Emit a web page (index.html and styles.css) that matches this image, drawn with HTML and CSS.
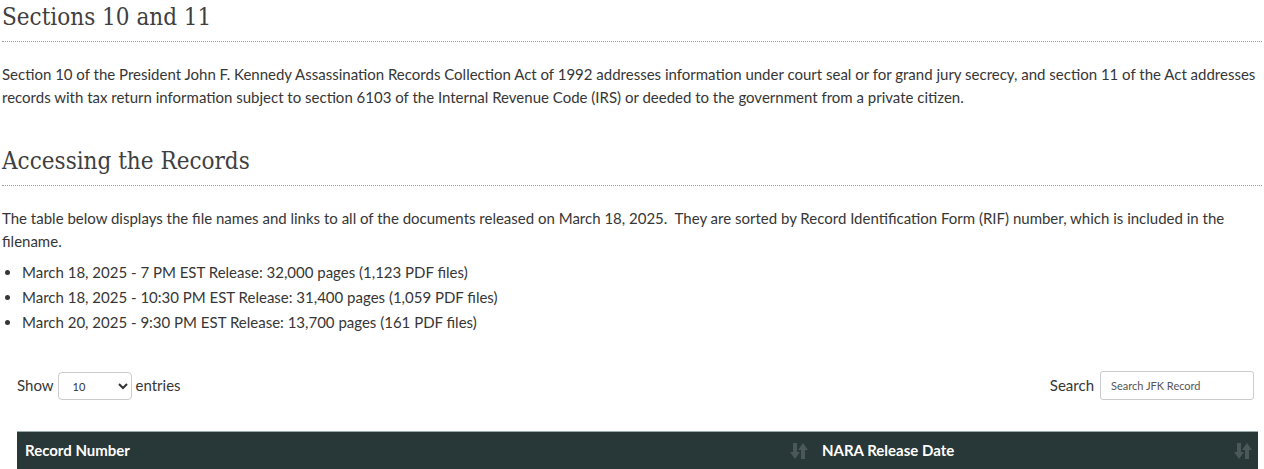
FILE: index.html
```html
<!DOCTYPE html>
<html lang="en">
<head>
    <meta charset="UTF-8">
    <meta name="viewport" content="width=device-width, initial-scale=1.0">
    <title>JFK Assassination Records - 2025 Documents Release</title>
    <link rel="stylesheet" href="styles.css">
</head>
<body>
    <div class="content">
        <h2 class="section-title">Sections 10 and 11</h2>
        <p>Section 10 of the President John F. Kennedy Assassination Records Collection Act of 1992 addresses information under court seal or for grand jury secrecy, and section 11 of the Act addresses records with tax return information subject to section 6103 of the Internal Revenue Code (IRS) or deeded to the government from a private citizen.</p>

        <h2 class="section-title">Accessing the Records</h2>
        <p class="intro">The table below displays the file names and links to all of the documents released on March 18, 2025.&nbsp; They are sorted by Record Identification Form (RIF) number, which is included in the filename.</p>
        <ul class="releases">
            <li>March 18, 2025 - 7 PM EST Release: 32,000 pages (1,123 PDF files)</li>
            <li>March 18, 2025 - 10:30 PM EST Release: 31,400 pages (1,059 PDF files)</li>
            <li>March 20, 2025 - 9:30 PM EST Release: 13,700 pages (161 PDF files)</li>
        </ul>

        <div class="records-table">
            <div class="table-controls">
                <label class="length">Show
                    <select>
                        <option>10</option>
                        <option>25</option>
                        <option>50</option>
                        <option>100</option>
                    </select>
                    entries</label>
                <label class="filter">Search
                    <input type="search" placeholder="Search JFK Record">
                </label>
            </div>

            <table>
                <thead>
                    <tr>
                        <th class="col-record">Record Number <span class="sort-icon">
                            <svg width="18" height="18" viewBox="0 0 18 18"><path d="M3 1h4v9h3l-5 7-5-7h3z"/><path d="M11 17h4V8h3l-5-7-5 7h3z"/></svg>
                        </span></th>
                        <th class="col-date">NARA Release Date <span class="sort-icon">
                            <svg width="18" height="18" viewBox="0 0 18 18"><path d="M3 1h4v9h3l-5 7-5-7h3z"/><path d="M11 17h4V8h3l-5-7-5 7h3z"/></svg>
                        </span></th>
                    </tr>
                </thead>
            </table>
        </div>
    </div>
</body>
</html>
```

FILE: styles.css
```css
* {
    margin: 0;
    padding: 0;
    box-sizing: border-box;
}

body {
    font-family: Lato, 'Liberation Sans', sans-serif;
    font-size: 15px;
    line-height: 23px;
    color: #363636;
    background: white;
}

.content {
    padding: 0 2px;
}

.section-title {
    font-family: 'DejaVu Serif Condensed', 'DejaVu Serif', serif;
    font-stretch: condensed;
    font-weight: normal;
    font-size: 24px;
    line-height: 34px;
    color: #3f3f3f;
    padding-bottom: 7px;
    border-bottom: 1px dotted #999;
    margin-bottom: 21px;
}

p {
    margin-bottom: 35px;
}

p.intro {
    margin-bottom: 7px;
}

.releases {
    padding-left: 20px;
    margin-bottom: 35px;
}

.releases li {
    line-height: 25px;
}

.records-table {
    padding: 0 4px 0 15px;
}

.table-controls {
    display: flex;
    justify-content: space-between;
    align-items: center;
    height: 30px;
    margin-bottom: 31px;
}

.table-controls label {
    display: flex;
    align-items: center;
    gap: 4px;
}

.length select {
    width: 74px;
    height: 28px;
    margin-top: 2px;
    border: 1px solid #ccc;
    border-radius: 4px;
    background: white;
    font-family: Lato, sans-serif;
    font-size: 11px;
    color: #333;
    padding-left: 10px;
}

.filter {
    padding-right: 4px;
}

.filter input {
    width: 154px;
    height: 29px;
    margin-left: 2px;
    border: 1px solid #ccc;
    border-radius: 3px;
    font-family: Lato, sans-serif;
    font-size: 11px;
    padding: 0 10px;
}

.filter input::placeholder {
    color: #555;
}

table {
    width: 100%;
    border-collapse: collapse;
}

th {
    background: #283737;
    color: white;
    text-align: left;
    font-weight: bold;
    font-size: 15px;
    height: 37px;
    padding: 0 8px;
    position: relative;
    border-top: 1px solid #9aa;
}

.col-record {
    width: 797px;
}

.sort-icon {
    position: absolute;
    right: 6px;
    top: 10px;
    fill: #4a5858;
}
```
